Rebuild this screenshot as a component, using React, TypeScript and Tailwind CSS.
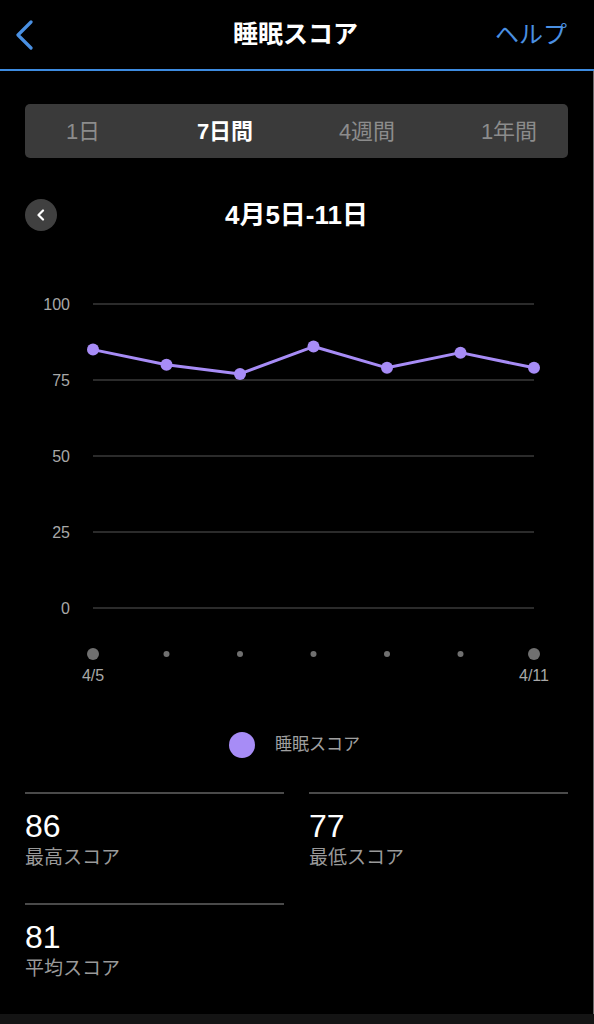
import React from "react";

const values = [85, 80, 77, 86, 79, 84, 79];
const xs = [93, 166.5, 240, 313.5, 387, 460.5, 534];
const yOf = (v: number) => 608 - v * 3.04;
const PURPLE = "#a78cf6";

function Stat({ value, label }: { value: string; label: string }) {
  return (
    <div className="border-t-2 border-[#4a4a4a] h-[111px] pt-[13px]">
      <div className="text-[32px] leading-[38px] text-white">{value}</div>
      <div className="text-[19px] leading-[26px] text-[#9a9a9a]">{label}</div>
    </div>
  );
}

export default function App() {
  const pts = values.map((v, i) => `${xs[i]},${yOf(v)}`).join(" ");
  return (
    <div
      className="w-[594px] h-[1024px] bg-black flex flex-col overflow-hidden"
      style={{ fontFamily: '"Liberation Sans", "Noto Sans CJK JP", sans-serif' }}
    >
      {/* header */}
      <div className="h-[69px] flex items-center justify-between px-[14px] shrink-0">
        <svg width="22" height="30" viewBox="0 0 22 30" className="mt-[1px]">
          <path d="M17 2 L4 15 L17 28" fill="none" stroke="#4a90e2" strokeWidth="3.2" strokeLinecap="round" strokeLinejoin="round" />
        </svg>
        <div className="text-white text-[25px] font-bold ml-[60px]">睡眠スコア</div>
        <div className="text-[#4a90e2] text-[24px] mr-[13px]">ヘルプ</div>
      </div>
      <div className="h-[2px] bg-[#3d8be0] shrink-0" />

      <div className="flex-1 flex flex-col border-r border-[#6a6a6a]">
        {/* segmented */}
        <div className="mt-[33px] ml-[25px] mr-[25px] h-[54px] rounded-[5px] bg-[#3a3a3a] flex items-center">
          <div className="grid grid-cols-[142px_142px_142px_142px] -ml-[13px] text-[22px] text-center">
            <div className="text-[#8c8c8c]">1日</div>
            <div className="text-white font-bold">7日間</div>
            <div className="text-[#8c8c8c]">4週間</div>
            <div className="text-[#8c8c8c]">1年間</div>
          </div>
        </div>

        {/* date nav */}
        <div className="mt-[41px] h-[32px] relative flex items-center justify-center">
          <div className="absolute left-[25px] top-0 w-[32px] h-[32px] rounded-full bg-[#404040] flex items-center justify-center">
            <svg width="10" height="12" viewBox="0 0 10 12">
              <path d="M7 1.5 L2.5 6 L7 10.5" fill="none" stroke="white" strokeWidth="2.2" strokeLinecap="round" strokeLinejoin="round" />
            </svg>
          </div>
          <div className="text-white text-[26px] font-bold">4月5日-11日</div>
        </div>

        {/* chart */}
        <svg width="594" height="470" viewBox="0 231 594 470" className="block">
          {[100, 75, 50, 25, 0].map((v) => (
            <g key={v}>
              <line x1="93" x2="534" y1={yOf(v)} y2={yOf(v)} stroke="#3a3a3a" strokeWidth="1.5" />
              <text x="70" y={yOf(v) + 5.5} textAnchor="end" fontSize="16" fill="#a8a8a8">
                {v}
              </text>
            </g>
          ))}
          <polyline points={pts} fill="none" stroke={PURPLE} strokeWidth="3" strokeLinejoin="round" />
          {values.map((v, i) => (
            <circle key={i} cx={xs[i]} cy={yOf(v)} r="6" fill={PURPLE} />
          ))}
          {xs.map((x, i) => (
            <circle key={i} cx={x} cy={654} r={i === 0 || i === 6 ? 6 : 3} fill="#707070" />
          ))}
          <text x="93" y="681" textAnchor="middle" fontSize="16" fill="#a8a8a8">4/5</text>
          <text x="534" y="681" textAnchor="middle" fontSize="16" fill="#a8a8a8">4/11</text>
        </svg>

        {/* legend */}
        <div className="mt-[31px] h-[26px] flex items-center pl-[229px]">
          <div className="w-[26px] h-[26px] rounded-full bg-[#a78cf6]" />
          <div className="ml-[20px] text-[17px] text-[#a0a0a0]">睡眠スコア</div>
        </div>

        {/* stats */}
        <div className="mt-[34px] px-[25px] grid grid-cols-2 gap-x-[25px]">
          <Stat value="86" label="最高スコア" />
          <Stat value="77" label="最低スコア" />
          <Stat value="81" label="平均スコア" />
        </div>
        <div className="flex-1" />
      </div>
      <div className="h-[13px] bg-[#141414] shrink-0" />
    </div>
  );
}
